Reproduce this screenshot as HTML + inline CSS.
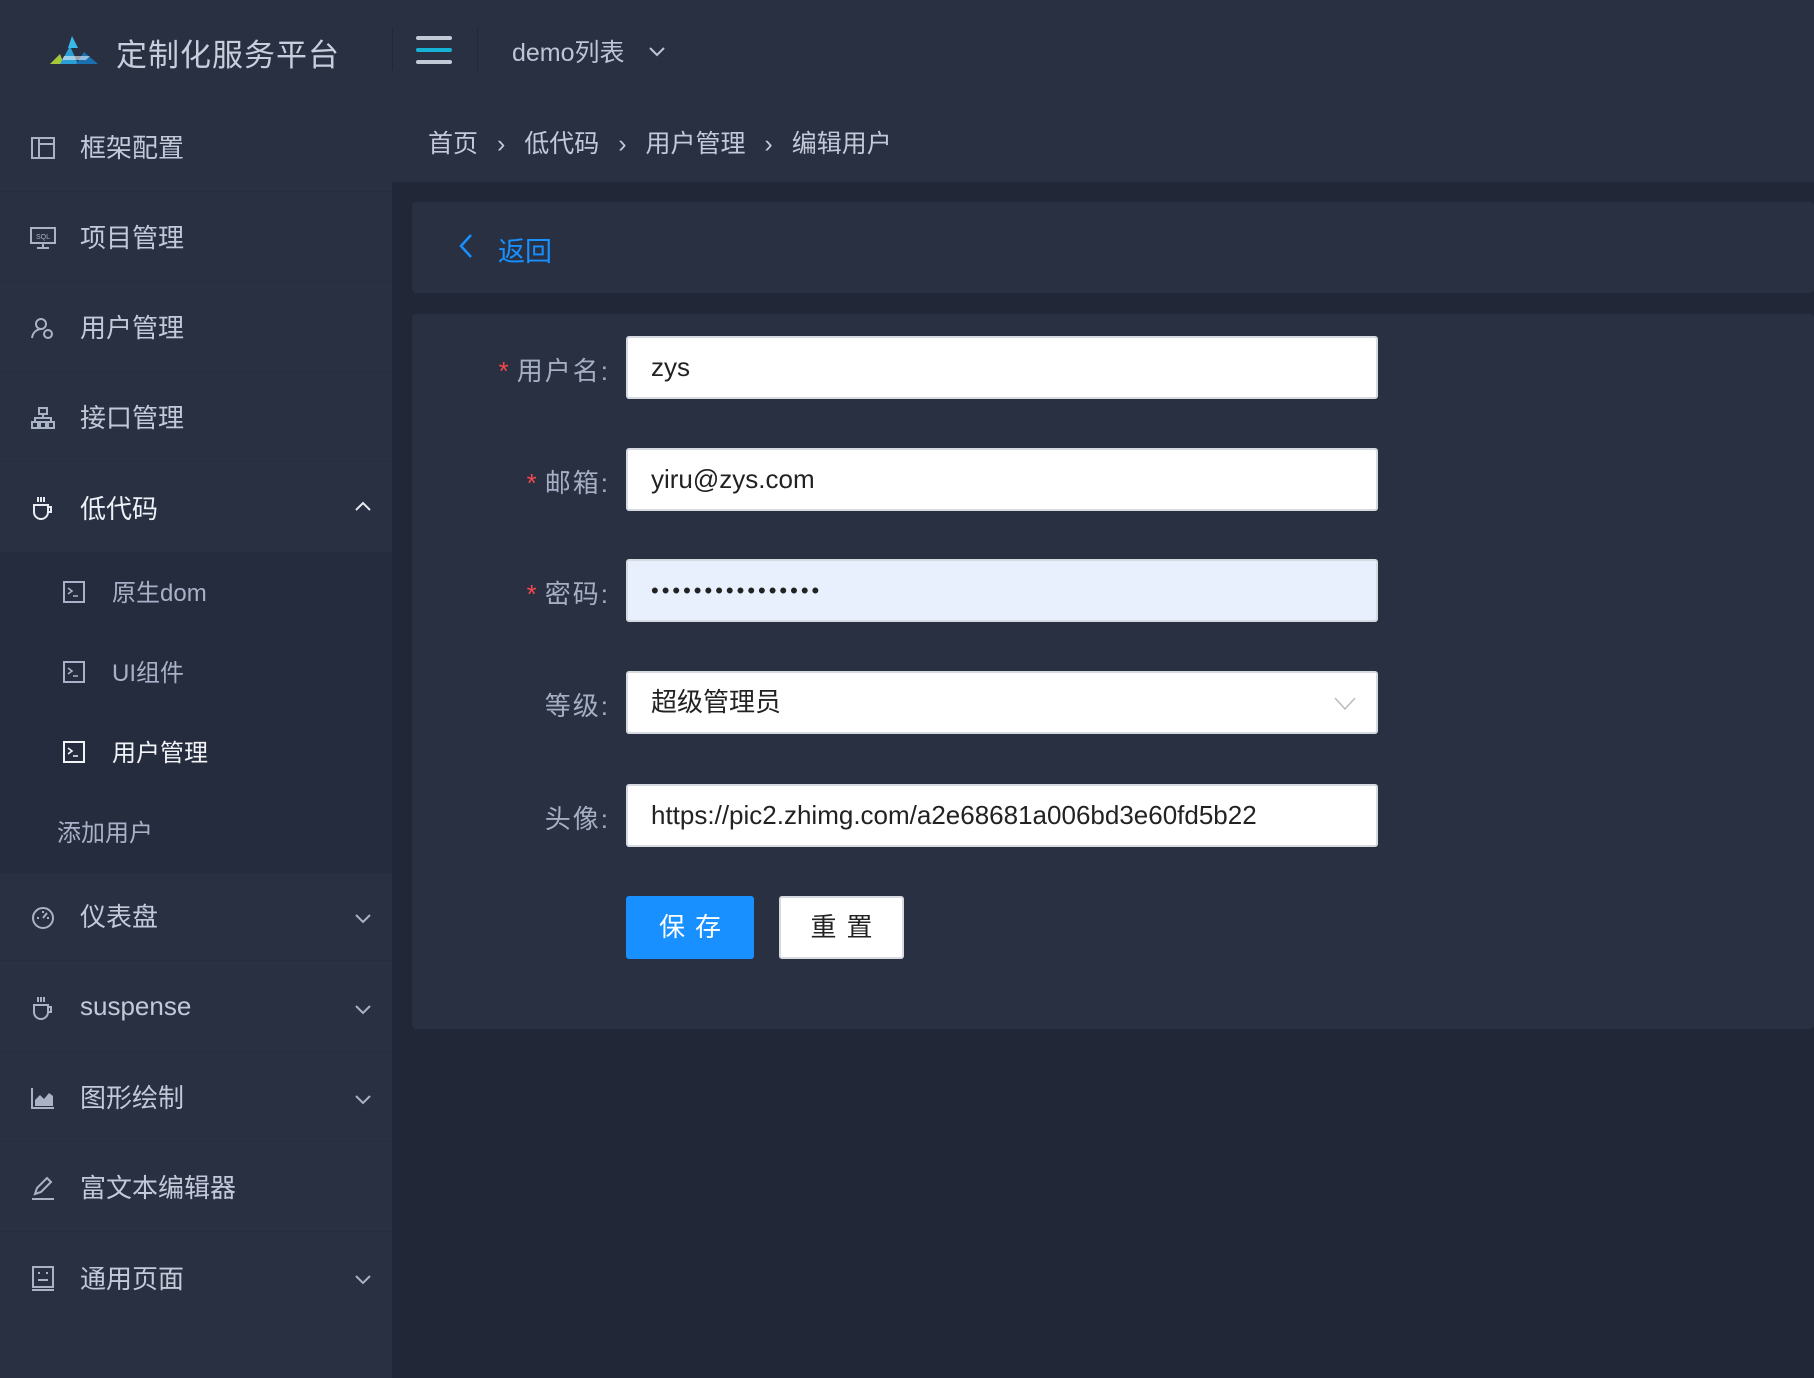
<!DOCTYPE html>
<html><head><meta charset="utf-8"><style>
*{margin:0;padding:0;box-sizing:border-box}
body{width:1814px;height:1378px;background:#212736;font-family:"Liberation Sans","Noto Sans CJK SC",sans-serif;position:relative;overflow:hidden;color:#b4bcd0}
.abs{position:absolute}
#side{left:0;top:0;width:392px;height:1378px;background:#283042}
#hdr{left:392px;top:0;width:1422px;height:102px;background:#283042}
.item{position:absolute;left:0;width:392px;height:90px;display:flex;align-items:center;font-size:26px;color:#c3c9d8;border-bottom:1px solid #252d3e}
.item .ic{position:absolute;left:30px;top:33px;width:26px;height:26px}
.item .t{position:absolute;left:80px}
.item .ch{position:absolute;left:354px;top:38px}
.sub{position:absolute;left:0;width:392px;height:80px;font-size:24px;color:#a8b1c8}
.sub .ic{position:absolute;left:63px;top:30px;width:22px;height:22px}
.sub .t{position:absolute;left:112px;top:22px}
.lbl{position:absolute;right:1204px;font-size:26px;color:#a6aec4;text-align:right;letter-spacing:2px}
.lbl b{color:#f5484a;font-weight:normal;margin-right:6px}
.inp{position:absolute;left:626px;width:752px;height:63px;background:#fff;border:2px solid #d6d9df;border-radius:3px;font-size:26px;color:#222;padding-left:23px;line-height:59px;white-space:nowrap;overflow:hidden}
</style></head><body>
<div id="side" class="abs"></div>
<div id="hdr" class="abs"></div>
<svg class="abs" style="left:50px;top:34px" width="50" height="32" viewBox="0 0 50 32"><polygon points="0,30 10,20 14,30" fill="#a5c83a"/><polygon points="10,30 20,12 28,30" fill="#2a9fd6"/><polygon points="22,2 28,14 18,14" fill="#3ab8e6"/><polygon points="26,30 34,18 48,30" fill="#1a6fb0"/><polygon points="14,22 40,22 36,26 12,26" fill="#e9f2f8" opacity=".6"/></svg>
<div class="abs" style="left:116px;top:30px;font-size:31px;color:#c8cedc;letter-spacing:1px">定制化服务平台</div>
<div class="abs" style="left:392px;top:28px;width:1px;height:42px;background:#222836"></div>
<div class="abs" style="left:416px;top:36px;width:36px;height:4px;background:#c4c9d8;border-radius:2px"></div>
<div class="abs" style="left:416px;top:48px;width:36px;height:4px;background:#17b3d6;border-radius:2px"></div>
<div class="abs" style="left:416px;top:60px;width:36px;height:4px;background:#c4c9d8;border-radius:2px"></div>
<div class="abs" style="left:477px;top:28px;width:1px;height:42px;background:#222836"></div>
<div class="abs" style="left:512px;top:33px;font-size:25px;color:#bfc5d4">demo列表</div>
<svg class="abs" style="left:648px;top:46px" width="18" height="12"><polyline points="2,2 9,9 16,2" fill="none" stroke="#bfc5d4" stroke-width="2"/></svg>

<div class="item" style="top:102px"><svg class="ic" viewBox="0 0 26 26"><rect x="2" y="3" width="22" height="20" fill="none" stroke="#aab2c6" stroke-width="2"/><line x1="9" y1="3" x2="9" y2="23" stroke="#aab2c6" stroke-width="2"/><line x1="9" y1="9" x2="24" y2="9" stroke="#aab2c6" stroke-width="2"/></svg><span class="t">框架配置</span></div>
<div class="item" style="top:192px"><svg class="ic" viewBox="0 0 26 26"><rect x="1" y="3" width="24" height="15" fill="none" stroke="#aab2c6" stroke-width="2"/><text x="13" y="14" font-size="7" fill="#aab2c6" text-anchor="middle" font-family="Liberation Sans">SQL</text><line x1="13" y1="18" x2="13" y2="23" stroke="#aab2c6" stroke-width="2"/><line x1="7" y1="23" x2="19" y2="23" stroke="#aab2c6" stroke-width="2"/></svg><span class="t">项目管理</span></div>
<div class="item" style="top:282px"><svg class="ic" viewBox="0 0 26 26"><circle cx="11" cy="9" r="5" fill="none" stroke="#aab2c6" stroke-width="2"/><path d="M2 23 C3 16 8 14 12 14" fill="none" stroke="#aab2c6" stroke-width="2"/><circle cx="18" cy="19" r="4" fill="none" stroke="#aab2c6" stroke-width="2"/></svg><span class="t">用户管理</span></div>
<div class="item" style="top:372px"><svg class="ic" viewBox="0 0 26 26"><rect x="9" y="3" width="8" height="6" fill="none" stroke="#aab2c6" stroke-width="2"/><rect x="2" y="17" width="6" height="6" fill="none" stroke="#aab2c6" stroke-width="2"/><rect x="10" y="17" width="6" height="6" fill="none" stroke="#aab2c6" stroke-width="2"/><rect x="18" y="17" width="6" height="6" fill="none" stroke="#aab2c6" stroke-width="2"/><path d="M13 9v4M5 17v-4h16v4" fill="none" stroke="#aab2c6" stroke-width="2"/></svg><span class="t">接口管理</span></div>
<div class="item" style="top:462px;color:#eef1f6;border:none"><svg class="ic" viewBox="0 0 26 26"><path d="M4 10h14v7a7 7 0 0 1-14 0z" fill="none" stroke="#e8ebf2" stroke-width="2"/><path d="M18 12h3v5h-3" fill="none" stroke="#e8ebf2" stroke-width="2"/><path d="M8 2v5M11 2v5M14 2v5" stroke="#e8ebf2" stroke-width="2"/></svg><span class="t">低代码</span><svg class="ch" width="18" height="12"><polyline points="2,10 9,3 16,10" fill="none" stroke="#e8ebf2" stroke-width="2"/></svg></div>
<div class="abs" style="left:0;top:552px;width:392px;height:321px;background:#252c3d"></div>
<div class="sub" style="top:551px"><svg class="ic" viewBox="0 0 22 22"><rect x="1" y="1" width="20" height="20" fill="none" stroke="#a8b1c8" stroke-width="2"/><path d="M5 7l4 3-4 3M10 15h5" fill="none" stroke="#a8b1c8" stroke-width="1.6"/></svg><span class="t">原生dom</span></div>
<div class="sub" style="top:631px"><svg class="ic" viewBox="0 0 22 22"><rect x="1" y="1" width="20" height="20" fill="none" stroke="#a8b1c8" stroke-width="2"/><path d="M5 7l4 3-4 3M10 15h5" fill="none" stroke="#a8b1c8" stroke-width="1.6"/></svg><span class="t">UI组件</span></div>
<div class="sub" style="top:711px;color:#f2f4f8"><svg class="ic" viewBox="0 0 22 22"><rect x="1" y="1" width="20" height="20" fill="none" stroke="#f2f4f8" stroke-width="2"/><path d="M5 7l4 3-4 3M10 15h5" fill="none" stroke="#f2f4f8" stroke-width="1.6"/></svg><span class="t">用户管理</span></div>
<div class="sub" style="top:791px"><span class="t" style="left:57px">添加用户</span></div>
<div class="item" style="top:871px"><svg class="ic" viewBox="0 0 26 26"><circle cx="13" cy="14" r="10" fill="none" stroke="#aab2c6" stroke-width="2"/><path d="M13 14l4-5" stroke="#aab2c6" stroke-width="2"/><path d="M7 14h2M17 14h2M13 7v2" stroke="#aab2c6" stroke-width="2"/></svg><span class="t">仪表盘</span><svg class="ch" width="18" height="12" style="top:42px"><polyline points="2,2 9,9 16,2" fill="none" stroke="#aab2c6" stroke-width="2"/></svg></div>
<div class="item" style="top:962px"><svg class="ic" viewBox="0 0 26 26"><path d="M4 10h14v7a7 7 0 0 1-14 0z" fill="none" stroke="#aab2c6" stroke-width="2"/><path d="M18 12h3v5h-3" fill="none" stroke="#aab2c6" stroke-width="2"/><path d="M8 2v5M11 2v5M14 2v5" stroke="#aab2c6" stroke-width="2"/></svg><span class="t">suspense</span><svg class="ch" width="18" height="12" style="top:42px"><polyline points="2,2 9,9 16,2" fill="none" stroke="#aab2c6" stroke-width="2"/></svg></div>
<div class="item" style="top:1052px"><svg class="ic" viewBox="0 0 26 26"><path d="M2 3v20h22" fill="none" stroke="#aab2c6" stroke-width="2"/><path d="M5 21v-6l5-5 4 4 5-6 4 3v10z" fill="#aab2c6"/></svg><span class="t">图形绘制</span><svg class="ch" width="18" height="12" style="top:42px"><polyline points="2,2 9,9 16,2" fill="none" stroke="#aab2c6" stroke-width="2"/></svg></div>
<div class="item" style="top:1142px"><svg class="ic" viewBox="0 0 26 26"><path d="M5 19l2-6 10-10 4 4-10 10z" fill="none" stroke="#aab2c6" stroke-width="2"/><line x1="2" y1="24" x2="24" y2="24" stroke="#aab2c6" stroke-width="2"/></svg><span class="t">富文本编辑器</span></div>
<div class="item" style="top:1232px;border:none"><svg class="ic" viewBox="0 0 26 26"><rect x="3" y="2" width="20" height="20" fill="none" stroke="#aab2c6" stroke-width="2"/><path d="M8 8h2M16 8h2M8 15h10M2 25h22" stroke="#aab2c6" stroke-width="2"/></svg><span class="t">通用页面</span><svg class="ch" width="18" height="12" style="top:42px"><polyline points="2,2 9,9 16,2" fill="none" stroke="#aab2c6" stroke-width="2"/></svg></div>

<div class="abs" style="left:392px;top:102px;width:1422px;height:80px;background:#283042"></div>
<div class="abs" style="left:428px;top:124px;font-size:25px;color:#c3c9d8">首页 <span style="margin:0 12px">›</span> 低代码 <span style="margin:0 12px">›</span> 用户管理 <span style="margin:0 12px">›</span> 编辑用户</div>
<div class="abs" style="left:412px;top:202px;width:1402px;height:91px;background:#283042;border-radius:4px"></div>
<svg class="abs" style="left:458px;top:233px" width="16" height="26"><polyline points="13,2 3,13 13,24" fill="none" stroke="#1890ff" stroke-width="2.5"/></svg>
<div class="abs" style="left:498px;top:230px;font-size:27px;color:#1890ff">返回</div>
<div class="abs" style="left:412px;top:314px;width:1402px;height:715px;background:#283042;border-radius:4px"></div>
<div class="lbl" style="top:351px"><b>*</b>用户名:</div>
<div class="inp" style="top:336px">zys</div>
<div class="lbl" style="top:463px"><b>*</b>邮箱:</div>
<div class="inp" style="top:448px">yiru@zys.com</div>
<div class="lbl" style="top:574px"><b>*</b>密码:</div>
<div class="inp" style="top:559px;background:#e8f0fe;font-size:22px;letter-spacing:3px">••••••••••••••••</div>
<div class="lbl" style="top:686px">等级:</div>
<div class="inp" style="top:671px">超级管理员<svg style="position:absolute;right:20px;top:24px" width="22" height="14"><polyline points="1,1 11,12 21,1" fill="none" stroke="#bbb" stroke-width="1.5"/></svg></div>
<div class="lbl" style="top:799px">头像:</div>
<div class="inp" style="top:784px">https://pic2.zhimg.com/a2e68681a006bd3e60fd5b22</div>
<div class="abs" style="left:626px;top:896px;width:128px;height:63px;background:#1890ff;border-radius:3px;color:#fff;font-size:26px;text-align:center;line-height:63px;letter-spacing:10px;text-indent:10px">保存</div>
<div class="abs" style="left:779px;top:896px;width:125px;height:63px;background:#fff;border:2px solid #d6d9df;border-radius:3px;color:#222;font-size:26px;text-align:center;line-height:59px;letter-spacing:10px;text-indent:10px">重置</div>
</body></html>
